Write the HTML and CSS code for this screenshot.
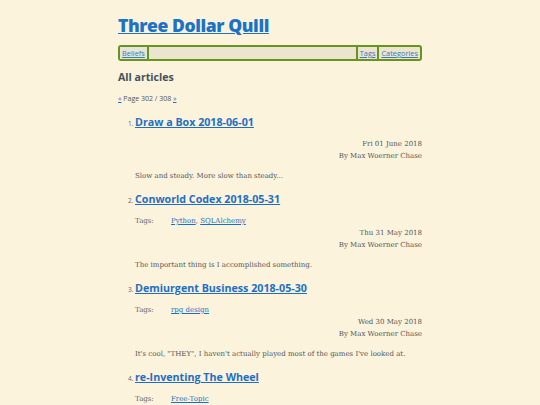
FILE: index.html
```html
<!DOCTYPE html>
<html>
<head>
<meta charset="utf-8">
<link rel="stylesheet" href="styles.css">
</head>
<body>
<div class="page">
  <h1 class="site-title"><a href="#">Three Dollar Quill</a></h1>
  <nav class="nav">
    <a class="nav-item" href="#">Beliefs</a>
    <span class="nav-fill"></span>
    <a class="nav-item sep" href="#">Tags</a>
    <a class="nav-item sep" href="#">Categories</a>
  </nav>
  <h2 class="section-title">All articles</h2>
  <p class="pager"><a href="#">«</a> Page 302 / 308 <a href="#">»</a></p>
  <ol class="articles" start="1">
    <li class="article">
      <h3 class="article-title"><a href="#">Draw a Box 2018-06-01</a></h3>
      <div class="meta"><span>Fri 01 June 2018</span><span>By Max Woerner Chase</span></div>
      <p class="summary">Slow and steady. More slow than steady...</p>
    </li>
    <li class="article">
      <h3 class="article-title"><a href="#">Conworld Codex 2018-05-31</a></h3>
      <div class="tags"><span class="tags-label">Tags:</span><span><a href="#">Python</a>, <a href="#">SQLAlchemy</a></span></div>
      <div class="meta"><span>Thu 31 May 2018</span><span>By Max Woerner Chase</span></div>
      <p class="summary">The important thing is I accomplished something.</p>
    </li>
    <li class="article">
      <h3 class="article-title"><a href="#">Demiurgent Business 2018-05-30</a></h3>
      <div class="tags"><span class="tags-label">Tags:</span><span><a href="#">rpg design</a></span></div>
      <div class="meta"><span>Wed 30 May 2018</span><span>By Max Woerner Chase</span></div>
      <p class="summary">It's cool, "THEY", I haven't actually played most of the games I've looked at.</p>
    </li>
    <li class="article">
      <h3 class="article-title"><a href="#">re-Inventing The Wheel</a></h3>
      <div class="tags"><span class="tags-label">Tags:</span><span><a href="#">Free-Topic</a></span></div>
    </li>
  </ol>
</div>
</body>
</html>
```

FILE: styles.css
```css
html, body {
  margin: 0;
  padding: 0;
  background: #fbf3dc;
}
body {
  font-family: "DejaVu Serif", serif;
  color: #555;
}
.page {
  width: 304px;
  margin: 0 auto;
  padding-top: 14px;
}
a { color: #1e6fc4; }
.site-title {
  margin: 0;
  font-family: "Open Sans", sans-serif;
  font-size: 17.5px;
  font-weight: 800;
  line-height: 22px;
  letter-spacing: -0.4px;
}
.site-title a { color: #1c73c6; }
.nav {
  margin-top: 9px;
  display: flex;
  align-items: stretch;
  border: 2px solid #66951f;
  border-radius: 3px;
  background: #ebe4cf;
  height: 12px;
  font-family: "Open Sans", sans-serif;
  font-size: 7.4px;
  line-height: 12px;
}
.nav-item {
  padding: 0 2px;
  color: #3e7ab8;
}
.nav-item:first-child {
  background: #e6e4d6;
  border-right: 2px solid #66951f;
}
.nav-fill { flex: 1; }
.sep { border-left: 2px solid #66951f; }
.section-title {
  margin: 8px 0 0;
  font-family: "Open Sans", sans-serif;
  font-size: 10.6px;
  font-weight: 700;
  color: #46515c;
  line-height: 16px;
}
.pager {
  margin: 9px 0 0;
  font-family: "Open Sans", sans-serif;
  font-size: 7px;
  line-height: 10px;
  color: #555;
}
.articles {
  margin: 9px 0 0;
  padding-left: 17px;
  font-size: 7px;
}
.article { padding: 0; }
.article::marker { font-size: 6.5px; color: #666; font-family: "Open Sans", sans-serif; }
.article-title {
  margin: 0;
  font-family: "Open Sans", sans-serif;
  font-size: 10.7px;
  font-weight: 700;
  line-height: 18px;
}
.tags {
  margin-top: 8px;
  display: flex;
  font-size: 7px;
  line-height: 10px;
  color: #666;
}
.tags-label { width: 36px; }
.meta {
  display: flex;
  flex-direction: column;
  align-items: flex-end;
  font-size: 7px;
  line-height: 12px;
  color: #555;
  margin-top: 1px;
}
.article:first-child .meta { margin-top: 7px; }
.summary {
  margin: 9px 0 9px;
  font-size: 7px;
  line-height: 10px;
  color: #555;
}
```
